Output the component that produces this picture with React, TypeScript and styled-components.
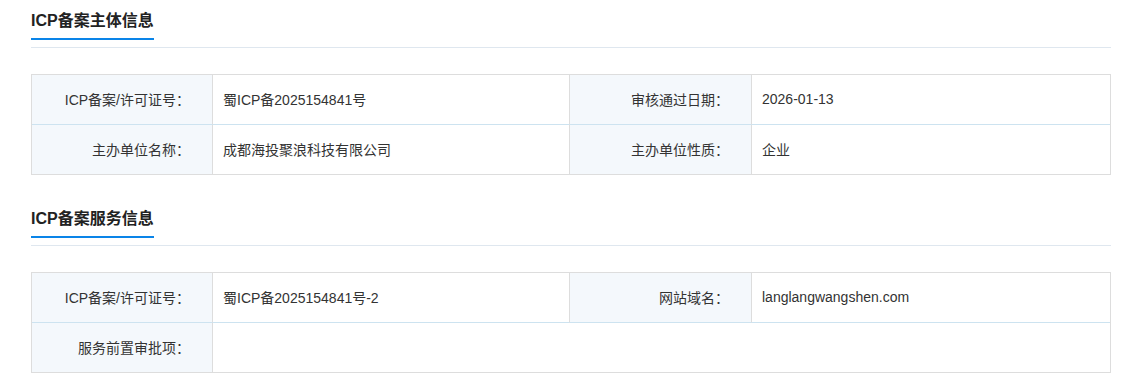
import React from "react";
import styled, { createGlobalStyle } from "styled-components";

const GlobalStyle = createGlobalStyle`
  body {
    margin: 0;
    background: #fff;
    font-family: "Liberation Sans", "Noto Sans CJK SC", sans-serif;
    color: #333;
  }
`;

const Page = styled.div`
  padding: 0 0 0 31px;
  width: 1080px;
`;

const Section = styled.section`
  & + & {
    margin-top: 23px;
  }
`;

const Header = styled.div`
  border-bottom: 1px solid #dfe7ef;
  padding-bottom: 7px;
`;

const Title = styled.h2`
  display: inline-block;
  margin: 0;
  padding-top: 9px;
  padding-bottom: 5px;
  font-size: 16px;
  line-height: 24px;
  font-weight: bold;
  color: #222;
  border-bottom: 2px solid #0a84e8;
`;

const Grid = styled.div`
  margin-top: 26px;
  display: grid;
  grid-template-columns: 181px 357px 182px 358px;
  border: 1px solid #dddddd;
  border-bottom: none;
`;

const Cell = styled.div<{ $label?: boolean; $last?: boolean; $span?: number; $edge?: boolean }>`
  box-sizing: border-box;
  height: 50px;
  display: flex;
  align-items: center;
  font-size: 14px;
  color: #333;
  white-space: nowrap;
  grid-column: span ${(p) => p.$span || 1};
  background: ${(p) => (p.$label ? "#f4f8fc" : "#fff")};
  justify-content: ${(p) => (p.$label ? "flex-end" : "flex-start")};
  padding: ${(p) => (p.$label ? "0 22px 1px 0" : "0 0 1px 10px")};
  border-right: ${(p) => (p.$edge ? "none" : "1px solid #dddddd")};
  border-bottom: 1px solid ${(p) => (p.$last ? "#dddddd" : "#cde3f0")};
`;

type Row = [string, string, string?, string?];

const subject: Row[] = [
  ["ICP备案/许可证号：", "蜀ICP备2025154841号", "审核通过日期：", "2026-01-13"],
  ["主办单位名称：", "成都海投聚浪科技有限公司", "主办单位性质：", "企业"],
];

const service: Row[] = [
  ["ICP备案/许可证号：", "蜀ICP备2025154841号-2", "网站域名：", "langlangwangshen.com"],
  ["服务前置审批项：", ""],
];

function InfoTable({ rows }: { rows: Row[] }) {
  return (
    <Grid>
      {rows.map((r, i) => {
        const last = i === rows.length - 1;
        if (r[2] === undefined) {
          return (
            <React.Fragment key={i}>
              <Cell $label $last={last}>{r[0]}</Cell>
              <Cell $span={3} $edge $last={last}>{r[1]}</Cell>
            </React.Fragment>
          );
        }
        return (
          <React.Fragment key={i}>
            <Cell $label $last={last}>{r[0]}</Cell>
            <Cell $last={last}>{r[1]}</Cell>
            <Cell $label $last={last}>{r[2]}</Cell>
            <Cell $edge $last={last}>{r[3]}</Cell>
          </React.Fragment>
        );
      })}
    </Grid>
  );
}

export default function App() {
  return (
    <>
      <GlobalStyle />
      <Page>
        <Section>
          <Header>
            <Title>ICP备案主体信息</Title>
          </Header>
          <InfoTable rows={subject} />
        </Section>
        <Section>
          <Header>
            <Title>ICP备案服务信息</Title>
          </Header>
          <InfoTable rows={service} />
        </Section>
      </Page>
    </>
  );
}
